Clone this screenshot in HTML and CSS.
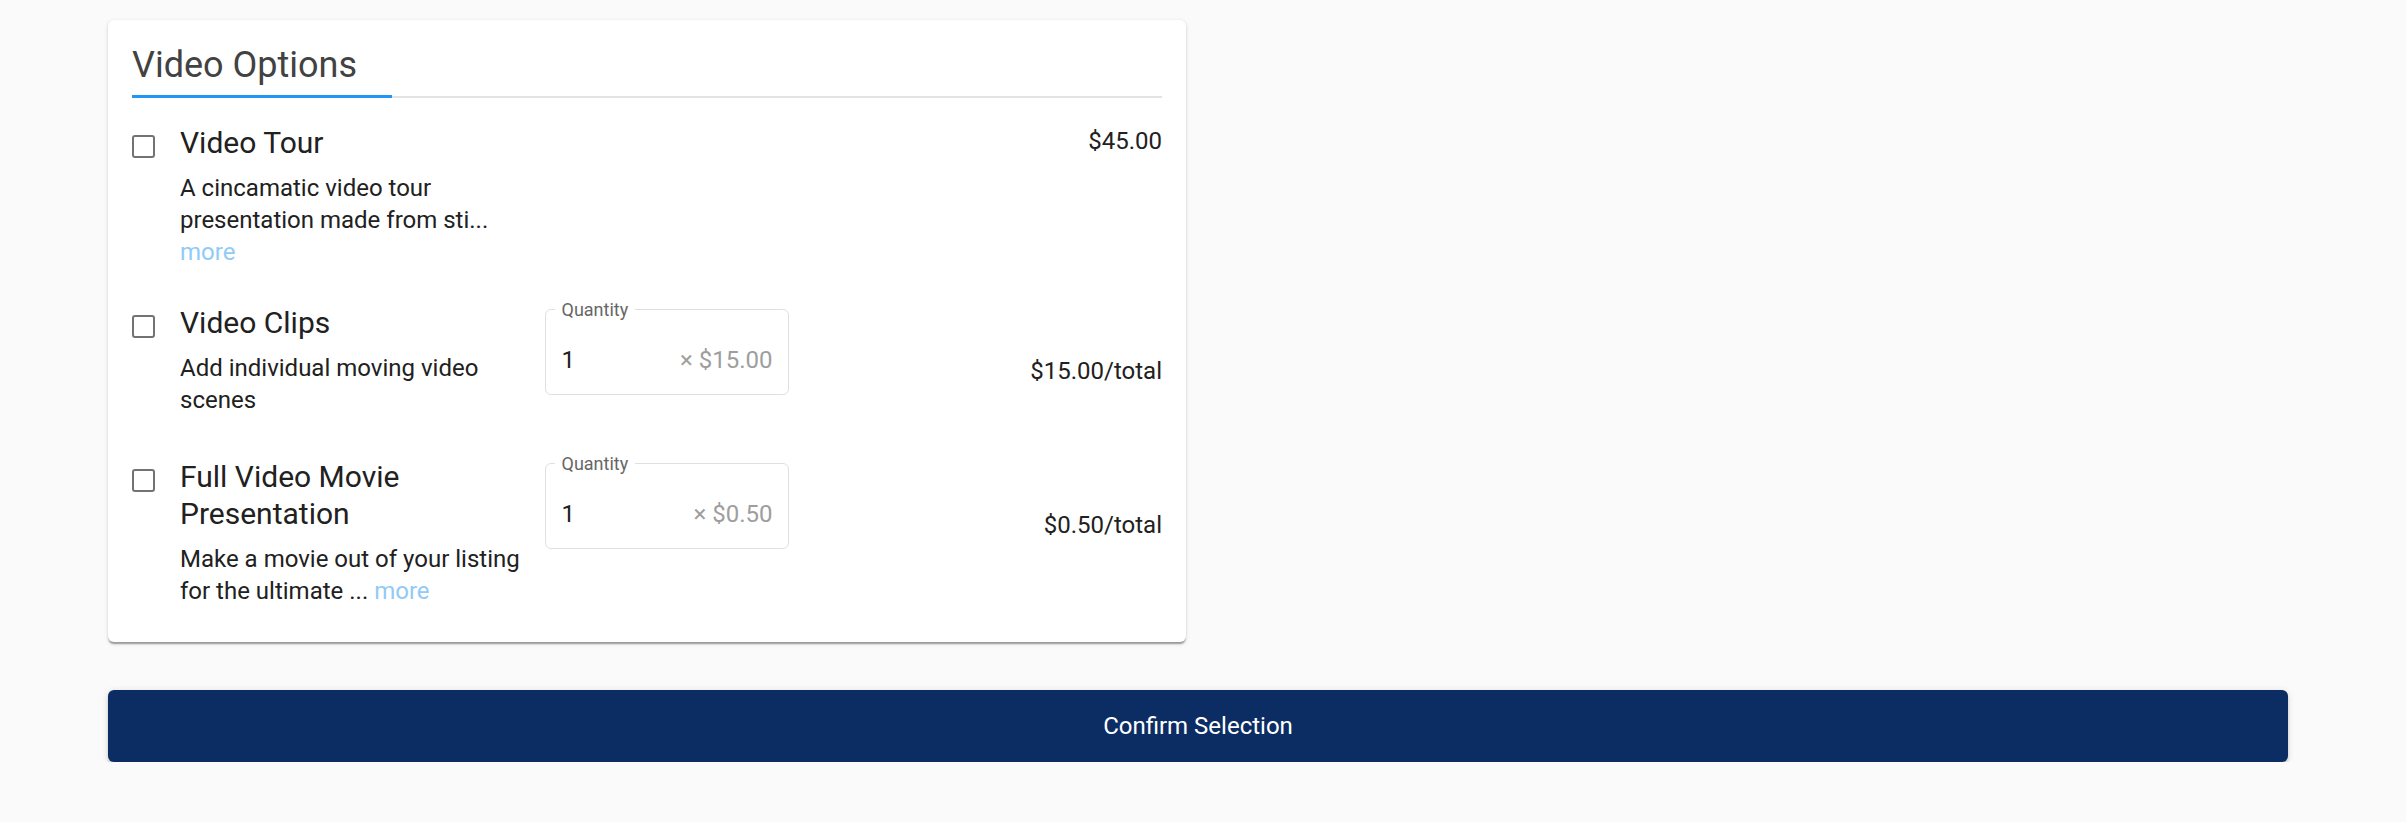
FILE: index.html
```html
<!DOCTYPE html>
<html lang="en">
<head>
<meta charset="utf-8">
<title>Video Options</title>
<link rel="stylesheet" href="styles.css">
</head>
<body>
<div class="page">
  <section class="card">
    <h2 class="card-title">Video Options</h2>
    <div class="underline"><span class="underline-active"></span><span class="underline-rest"></span></div>

    <div class="options">
      <div class="option option-tour">
        <span class="checkbox"></span>
        <div class="option-text">
          <div class="option-name">Video Tour</div>
          <p class="option-desc">A cincamatic video tour presentation made from sti...<br><a class="more" href="#">more</a></p>
        </div>
        <div class="qty-cell"></div>
        <div class="price">$45.00</div>
      </div>

      <div class="option option-clips">
        <span class="checkbox"></span>
        <div class="option-text">
          <div class="option-name">Video Clips</div>
          <p class="option-desc">Add individual moving video scenes</p>
        </div>
        <div class="qty-cell">
          <fieldset class="qty">
            <legend class="qty-label">Quantity</legend>
            <div class="qty-row"><span class="qty-value">1</span><span class="qty-suffix">× $15.00</span></div>
          </fieldset>
        </div>
        <div class="price price-qty">$15.00/total</div>
      </div>

      <div class="option option-movie">
        <span class="checkbox"></span>
        <div class="option-text">
          <div class="option-name">Full Video Movie Presentation</div>
          <p class="option-desc">Make a movie out of your listing for the ultimate ... <a class="more" href="#">more</a></p>
        </div>
        <div class="qty-cell">
          <fieldset class="qty">
            <legend class="qty-label">Quantity</legend>
            <div class="qty-row"><span class="qty-value">1</span><span class="qty-suffix">× $0.50</span></div>
          </fieldset>
        </div>
        <div class="price price-qty">$0.50/total</div>
      </div>
    </div>
  </section>

  <button class="confirm" type="button">Confirm Selection</button>
</div>
</body>
</html>
```

FILE: styles.css
```css
* { box-sizing: border-box; }

html, body {
  margin: 0;
  padding: 0;
  background: #fafafa;
  font-family: Roboto, "Liberation Sans", Arial, sans-serif;
  color: #212121;
}

.page {
  width: 2180px;
  margin-left: 108px;
  padding-top: 20px;
}

.card {
  width: 1078px;
  background: #fff;
  border-radius: 6px;
  padding: 24px 24px 35px;
  box-shadow: 0 3px 1.5px -1.5px rgba(0,0,0,0.2), 0 1.5px 1.5px 0 rgba(0,0,0,0.14), 0 1.5px 4.5px 0 rgba(0,0,0,0.12);
}

.card-title {
  margin: 0;
  font-size: 36px;
  line-height: 43px;
  font-weight: 400;
  color: #424242;
  padding-bottom: 8px;
}

.underline {
  display: flex;
  align-items: flex-end;
  height: 3px;
}
.underline-active {
  width: 260px;
  height: 3px;
  background: #2196f3;
}
.underline-rest {
  flex: 1;
  height: 2px;
  background: #e3e3e3;
}

.options {
  margin-top: 26px;
}

.option {
  display: grid;
  grid-template-columns: 48px 365px 244px 1fr;
  align-items: start;
}
.option-tour { margin-bottom: 36px; }
.option-clips { margin-bottom: 42px; }

.checkbox {
  display: block;
  width: 23px;
  height: 23px;
  margin-top: 10.5px;
  border: 2px solid #737373;
  border-radius: 3px;
  background: #fff;
}

.option-text {
  padding-right: 8px;
}

.option-name {
  font-size: 30px;
  line-height: 37px;
  color: #212121;
}

.option-desc {
  margin: 11px 0 0;
  font-size: 24px;
  line-height: 32px;
  color: #212121;
}

.more {
  color: #90caf9;
  text-decoration: none;
}

.qty {
  margin: 0;
  padding: 0 15.5px 19px;
  border: 1.5px solid #e0e0e0;
  border-radius: 6px;
  min-width: 0;
  width: 244px;
}

.qty-label {
  margin-left: -7px;
  padding: 0 7px;
  font-size: 18px;
  line-height: 11px;
  color: #666;
}

.qty-row {
  display: flex;
  justify-content: space-between;
  align-items: baseline;
  padding-top: 31px;
  font-size: 24px;
  line-height: 29px;
}
.qty-value { color: #212121; }
.qty-suffix { color: #9e9e9e; }

.price {
  text-align: right;
  font-size: 24px;
  line-height: 29px;
  color: #212121;
  padding-top: 2.5px;
}
.price-qty { padding-top: 53px; }

.confirm {
  display: block;
  width: 2180px;
  height: 72px;
  margin-top: 48px;
  border: 0;
  border-radius: 6px;
  background: #0c2d63;
  color: #fff;
  font-family: Roboto, "Liberation Sans", Arial, sans-serif;
  font-size: 24px;
  font-weight: 400;
  cursor: pointer;
  box-shadow: 0 4.5px 1.5px -3px rgba(0,0,0,0.2), 0 3px 3px 0 rgba(0,0,0,0.14), 0 1.5px 7.5px 0 rgba(0,0,0,0.12);
}
```
